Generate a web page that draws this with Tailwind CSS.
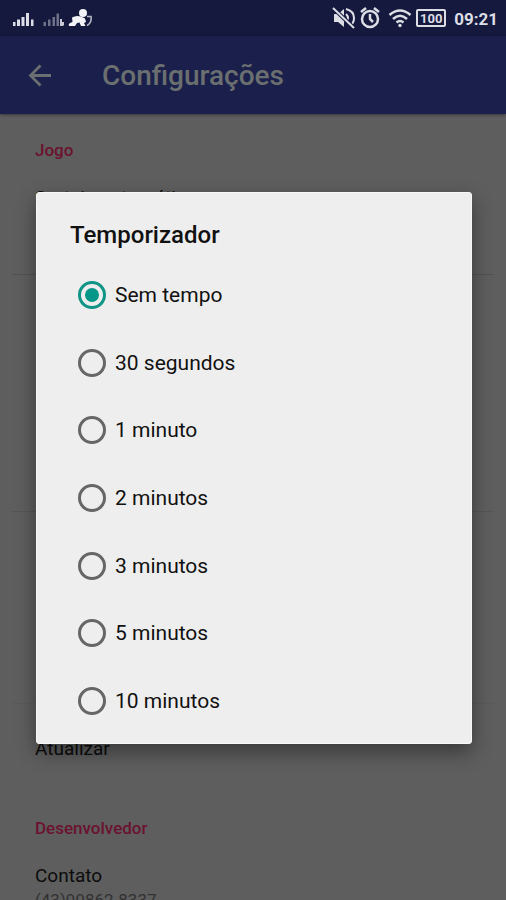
<!DOCTYPE html>
<html lang="pt-BR">
<head>
<meta charset="utf-8">
<meta name="viewport" content="width=device-width, initial-scale=1">
<title>Configurações</title>
<script src="https://cdn.jsdelivr.net/npm/@tailwindcss/browser@4"></script>
</head>
<body class="bg-[#5e5e5e] font-['Roboto',sans-serif]">
<div class="relative h-screen overflow-hidden flex flex-col">
  <!-- Status bar -->
  <div class="h-9 shrink-0 bg-[#14193d] flex items-center justify-between pl-3 pr-2 text-[#dcdde5]">
    <div class="flex items-center gap-2">
      <svg class="w-[22px] h-5" viewBox="0 0 22 20" fill="currentColor"><path d="M1 14h2.500v4H1zM5 11.500h3V18H5zM9.500 9h3v9h-3zM14 5h3v13h-3zM19 11.500h2.500V18H19z"/></svg>
      <svg class="w-[22px] h-5" viewBox="0 0 22 20" fill="currentColor"><g opacity=".45"><path d="M1.500 14H4v4H1.500zM6 11.500h2.500V18H6zM10.500 9H13v9h-2.500zM14.500 5.500H17V18h-2.500z"/></g><path opacity=".9" d="M18 11h2v3h2.500v3l-2 1H18z"/></svg>
      <svg class="w-6 h-5 -ml-1" viewBox="0 0 24 20" fill="#f4f4f8"><circle cx="15" cy="5" r="4"/><path d="M4 9.500Q8 7 13 8.500l4 2 1 3.500-2 1 1.500 3H13l-1.500-3.500L9 15l-2 3H1q-1-2 1-3l2.500-1z"/><path d="M19 8.500h4q1 6-4 9" fill="none" stroke="currentColor" stroke-width="1.600" opacity=".8"/></svg>
    </div>
    <div class="flex items-center gap-2">
      <svg class="w-6 h-6" viewBox="0 0 24 24" fill="none" stroke="currentColor" stroke-width="2"><path d="M2 8h4l6-5v18l-6-5H2z" fill="currentColor" stroke="none"/><path d="M14 8q4 4 0 8M14 3q8 2 8 9 0 5-4 8"/><path d="M1 2l21 20" stroke="#14193d" stroke-width="4"/><path d="M1 2l21 20"/></svg>
      <svg class="w-5 h-6 -ml-1" viewBox="0 0 20 24" fill="none" stroke="currentColor" stroke-width="2.500"><circle cx="10" cy="13" r="8"/><path d="M10 8v5l3 3M1 6l5-4M19 6l-5-4"/></svg>
      <svg class="w-6 h-6" viewBox="0 0 24 24" fill="none" stroke="currentColor" stroke-width="2.600"><path d="M1.500 9q10.500-9 21 0M5 13q7-6.500 14 0M8.500 16.500q3.500-3 7 0"/><circle cx="12" cy="19.500" r="1.700" fill="currentColor" stroke="none"/></svg>
      <span class="w-[30px] h-[18px] -ml-1 border-2 border-current rounded-[2px] flex items-center justify-center text-[13px] leading-none font-bold">100</span>
      <time class="text-[17px] leading-5 pt-0.5 font-bold">09:21</time>
    </div>
  </div>
  <!-- App bar -->
  <header class="h-[78px] shrink-0 bg-[#1a204b] shadow-[0_1px_3px_rgba(0,0,0,0.4)] flex items-center pl-7 pt-0.5 text-[#6b6f70]">
    <button type="button" aria-label="Voltar" class="w-6 h-6 mr-[50px]">
      <svg class="w-6 h-6" viewBox="0 0 24 24" fill="none" stroke="currentColor" stroke-width="2.800"><path d="M23 11.500H3M12.500 1.500L2.500 11.500l10 10"/></svg>
    </button>
    <h1 class="text-[28px] leading-8 font-medium">Configurações</h1>
  </header>
  <!-- Settings behind the dialog -->
  <main class="flex-1 px-3 text-[19px] leading-7 text-[#0c0c0c]">
    <section class="h-[161px] border-b border-[#525252] px-[23px] pt-6">
      <h2 class="text-[17px] leading-6 text-[#6b1230] font-medium">Jogo</h2>
      <p class="pt-[22px]">Sorteio automático</p>
    </section>
    <section class="h-[237px] border-b border-[#565656]"></section>
    <section class="h-[192px] border-b border-[#5a5a5a]"></section>
    <section class="px-[23px] pt-[31px]">
      <p>Atualizar</p>
    </section>
    <section class="px-[23px] pt-[53px]">
      <h2 class="text-[17px] leading-6 text-[#6b1230] font-medium">Desenvolvedor</h2>
      <p class="pt-[22px]">Contato</p>
      <p class="text-[17px] leading-5 text-[#323232]">(43)99862-8337</p>
    </section>
  </main>
  <!-- Dialog -->
  <div class="absolute inset-0 pt-9 pl-9 pr-[34px] flex items-center">
    <form role="dialog" aria-labelledby="dialog-title" class="w-full bg-[#eeeeee] rounded-[3px] border border-[#f8f8f8] pt-6 pb-2 shadow-[0_8px_20px_rgba(0,0,0,0.4)] text-[#111111]">
      <h2 id="dialog-title" class="pl-[33px] text-[24px] leading-9 mb-2 font-medium">Temporizador</h2>
      <div class="h-[474px] grid auto-rows-fr pl-[41px] text-[21px] leading-7">
        <label class="flex items-center gap-[9px]"><input type="radio" name="tempo" checked class="appearance-none w-7 h-7 rounded-full border-[3px] border-[#666666] checked:border-[#109486] checked:bg-[#009688] checked:bg-clip-content checked:p-1"><span>Sem tempo</span></label>
        <label class="flex items-center gap-[9px]"><input type="radio" name="tempo" class="appearance-none w-7 h-7 rounded-full border-[3px] border-[#666666] checked:border-[#109486] checked:bg-[#009688] checked:bg-clip-content checked:p-1"><span>30 segundos</span></label>
        <label class="flex items-center gap-[9px]"><input type="radio" name="tempo" class="appearance-none w-7 h-7 rounded-full border-[3px] border-[#666666] checked:border-[#109486] checked:bg-[#009688] checked:bg-clip-content checked:p-1"><span>1 minuto</span></label>
        <label class="flex items-center gap-[9px]"><input type="radio" name="tempo" class="appearance-none w-7 h-7 rounded-full border-[3px] border-[#666666] checked:border-[#109486] checked:bg-[#009688] checked:bg-clip-content checked:p-1"><span>2 minutos</span></label>
        <label class="flex items-center gap-[9px]"><input type="radio" name="tempo" class="appearance-none w-7 h-7 rounded-full border-[3px] border-[#666666] checked:border-[#109486] checked:bg-[#009688] checked:bg-clip-content checked:p-1"><span>3 minutos</span></label>
        <label class="flex items-center gap-[9px]"><input type="radio" name="tempo" class="appearance-none w-7 h-7 rounded-full border-[3px] border-[#666666] checked:border-[#109486] checked:bg-[#009688] checked:bg-clip-content checked:p-1"><span>5 minutos</span></label>
        <label class="flex items-center gap-[9px]"><input type="radio" name="tempo" class="appearance-none w-7 h-7 rounded-full border-[3px] border-[#666666] checked:border-[#109486] checked:bg-[#009688] checked:bg-clip-content checked:p-1"><span>10 minutos</span></label>
      </div>
    </form>
  </div>
</div>
</body>
</html>
